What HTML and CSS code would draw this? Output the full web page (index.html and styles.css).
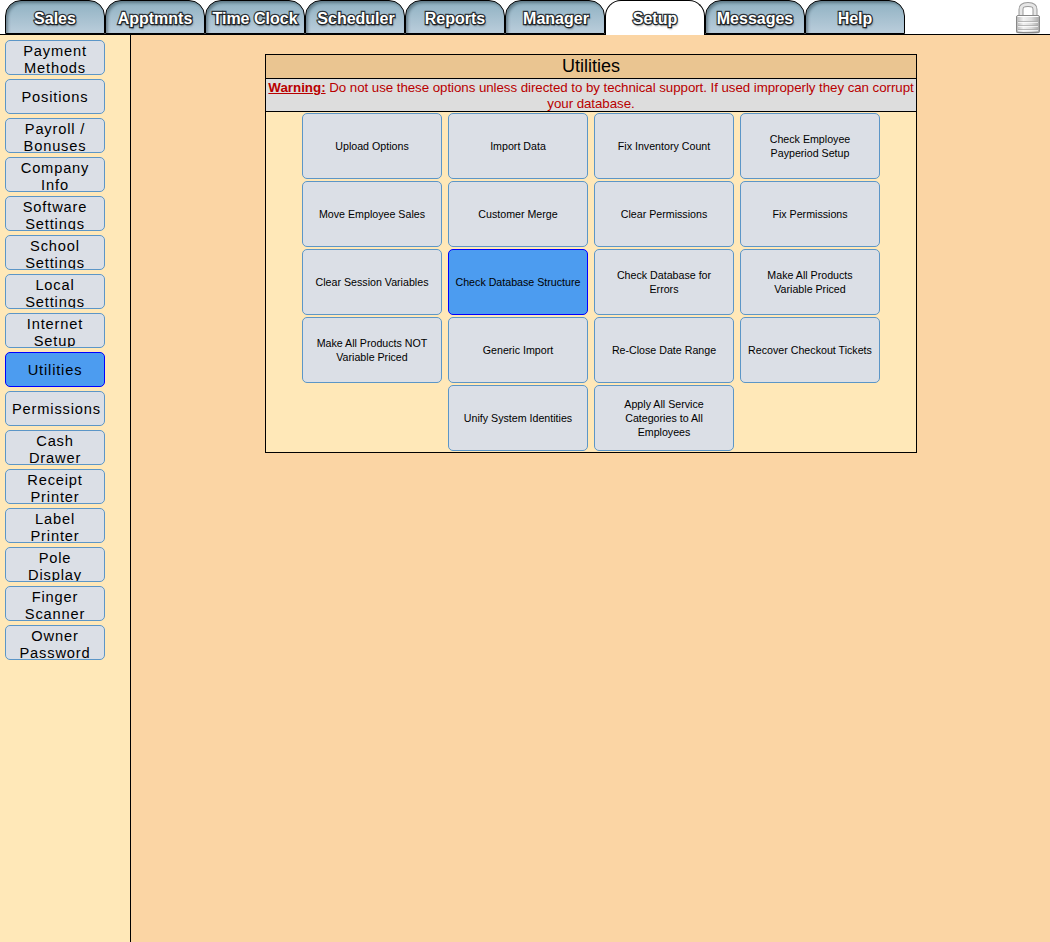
FILE: index.html
```html
<!DOCTYPE html>
<html lang="en">
<head>
<meta charset="utf-8">
<title>Utilities</title>
<link rel="stylesheet" href="styles.css">
</head>
<body>
<header class="topbar">
  <nav class="tabs">
    <a class="tab">Sales</a>
    <a class="tab">Apptmnts</a>
    <a class="tab">Time Clock</a>
    <a class="tab tab-right">Scheduler</a>
    <a class="tab">Reports</a>
    <a class="tab tab-right">Manager</a>
    <a class="tab tab-active">Setup</a>
    <a class="tab">Messages</a>
    <a class="tab">Help</a>
  </nav>
  <svg class="lock" width="26" height="34" viewBox="0 0 26 34">
    <defs>
      <linearGradient id="metal" x1="0" x2="1" y1="0" y2="0">
        <stop offset="0" stop-color="#b8b8b8"/><stop offset=".3" stop-color="#f2f2f2"/><stop offset=".65" stop-color="#dcdcdc"/><stop offset="1" stop-color="#a8a8a8"/>
      </linearGradient>
    </defs>
    <ellipse cx="13" cy="32.5" rx="12" ry="1.3" fill="#bbb"/>
    <path d="M6 16V9.500C6 5 9 4.500 13 4.500s7 .5 7 5V16" fill="none" stroke="#999" stroke-width="5"/>
    <path d="M6 16V9.500C6 5 9 4.500 13 4.500s7 .5 7 5V16" fill="none" stroke="#e6e6e6" stroke-width="3"/>
    <rect x="1.500" y="15.500" width="23" height="17" rx="1.500" fill="url(#metal)" stroke="#888"/>
    <path d="M2.500 16.500h21" stroke="#fff"/>
    <path d="M3 21.500h20M3 25.500h20M3 29.500h20" stroke="#aaa" stroke-opacity=".8"/>
    <path d="M3 22.500h20M3 26.500h20M3 30.500h20" stroke="#fff" stroke-opacity=".7"/>
  </svg>
</header>
<div class="layout">
  <aside class="sidebar">
    <a class="side-btn">Payment Methods</a>
    <a class="side-btn single">Positions</a>
    <a class="side-btn">Payroll / Bonuses</a>
    <a class="side-btn">Company Info</a>
    <a class="side-btn">Software Settings</a>
    <a class="side-btn">School Settings</a>
    <a class="side-btn">Local Settings</a>
    <a class="side-btn">Internet Setup</a>
    <a class="side-btn single selected">Utilities</a>
    <a class="side-btn single">Permissions</a>
    <a class="side-btn">Cash Drawer</a>
    <a class="side-btn">Receipt Printer</a>
    <a class="side-btn">Label Printer</a>
    <a class="side-btn">Pole Display</a>
    <a class="side-btn">Finger Scanner</a>
    <a class="side-btn">Owner Password</a>
  </aside>
  <main class="content">
    <section class="panel">
      <h1 class="panel-title">Utilities</h1>
      <p class="warning"><b class="warning-label">Warning:</b> Do not use these options unless directed to by technical support. If used improperly they can corrupt your database.</p>
      <div class="options">
        <a class="option">Upload Options</a>
        <a class="option">Import Data</a>
        <a class="option">Fix Inventory Count</a>
        <a class="option">Check Employee<br>Payperiod Setup</a>
        <a class="option">Move Employee Sales</a>
        <a class="option">Customer Merge</a>
        <a class="option">Clear Permissions</a>
        <a class="option">Fix Permissions</a>
        <a class="option">Clear Session Variables</a>
        <a class="option selected">Check Database Structure</a>
        <a class="option">Check Database for<br>Errors</a>
        <a class="option">Make All Products<br>Variable Priced</a>
        <a class="option">Make All Products NOT<br>Variable Priced</a>
        <a class="option">Generic Import</a>
        <a class="option">Re-Close Date Range</a>
        <a class="option">Recover Checkout Tickets</a>
        <a class="option">Unify System Identities</a>
        <a class="option">Apply All Service<br>Categories to All<br>Employees</a>
      </div>
    </section>
  </main>
</div>
</body>
</html>
```
FILE: styles.css
```css
* { box-sizing: border-box; }

body {
  margin: 0;
  height: 942px;
  display: flex;
  flex-direction: column;
  overflow: hidden;
  background: #fff;
  color: #000;
  font-family: "Liberation Sans", Arial, sans-serif;
}

.topbar {
  flex: none;
  height: 35px;
  padding: 0 9px 0 5px;
  display: flex;
  justify-content: space-between;
  border-bottom: 1px solid #000;
}

.tabs { display: flex; }

.tab {
  width: 100px;
  height: 34px;
  padding-top: 8px;
  border: 1px solid #000;
  border-radius: 16px 16px 0 0;
  background: linear-gradient(#8fb1c2, #bacddb);
  box-shadow: inset 2px 2px 3px rgba(30, 50, 60, .45);
  color: #fff;
  font-size: 16px;
  font-weight: bold;
  line-height: 19px;
  text-align: center;
  white-space: nowrap;
  -webkit-text-stroke: 2.4px #2c3338;
  paint-order: stroke fill;
  text-shadow: 1px 2px 2px rgba(0, 0, 0, .45);
}

.tab-right { padding-left: 2px; }

.tab-active {
  height: 35px;
  border-bottom: 0;
  background: #fff;
  box-shadow: none;
}

.lock { display: block; }

.layout {
  flex: 1;
  display: flex;
}

.sidebar {
  width: 131px;
  padding: 5px;
  display: flex;
  flex-direction: column;
  gap: 4px;
  background: #ffe8b8;
  border-right: 1px solid #000;
}

.side-btn {
  width: 100px;
  height: 35px;
  padding: 2px 6px 0;
  display: flex;
  flex: none;
  align-items: safe center;
  justify-content: safe center;
  overflow: hidden;
  background: #dbdfe6;
  border: 1px solid #5c96c7;
  border-radius: 5px;
  font-size: 14.67px;
  line-height: 17px;
  letter-spacing: .83px;
  text-align: center;
}

.single { padding-top: 1px; }

.content {
  flex: 1;
  padding: 19px 0 0 134px;
  background: #fbd5a4;
}

.panel {
  width: 652px;
  border: 1px solid #000;
  background: #ffe8b8;
}

.panel-title {
  margin: 0;
  height: 24px;
  border-bottom: 1px solid #000;
  background: #eac591;
  font-size: 18px;
  font-weight: normal;
  line-height: 23px;
  text-align: center;
}

.warning {
  margin: 0;
  height: 33px;
  padding-top: 1px;
  border-bottom: 1px solid #000;
  background: #ddd;
  color: #b90000;
  font-size: 13.33px;
  line-height: 16px;
  letter-spacing: -.06px;
  text-align: center;
}

.warning-label {
  letter-spacing: 0;
  text-decoration: underline;
}

.options {
  padding: 1px 30px;
  display: flex;
  flex-wrap: wrap;
  justify-content: center;
  gap: 2px 6px;
}

.option {
  width: 140px;
  height: 66px;
  padding: 0 5px;
  display: flex;
  align-items: center;
  justify-content: center;
  background: #dbdfe6;
  border: 1px solid #5c96c7;
  border-radius: 5px;
  font-size: 10.67px;
  line-height: 14px;
  text-align: center;
}

.selected {
  background: #4c9cf0;
  border-color: #00f;
}
```
